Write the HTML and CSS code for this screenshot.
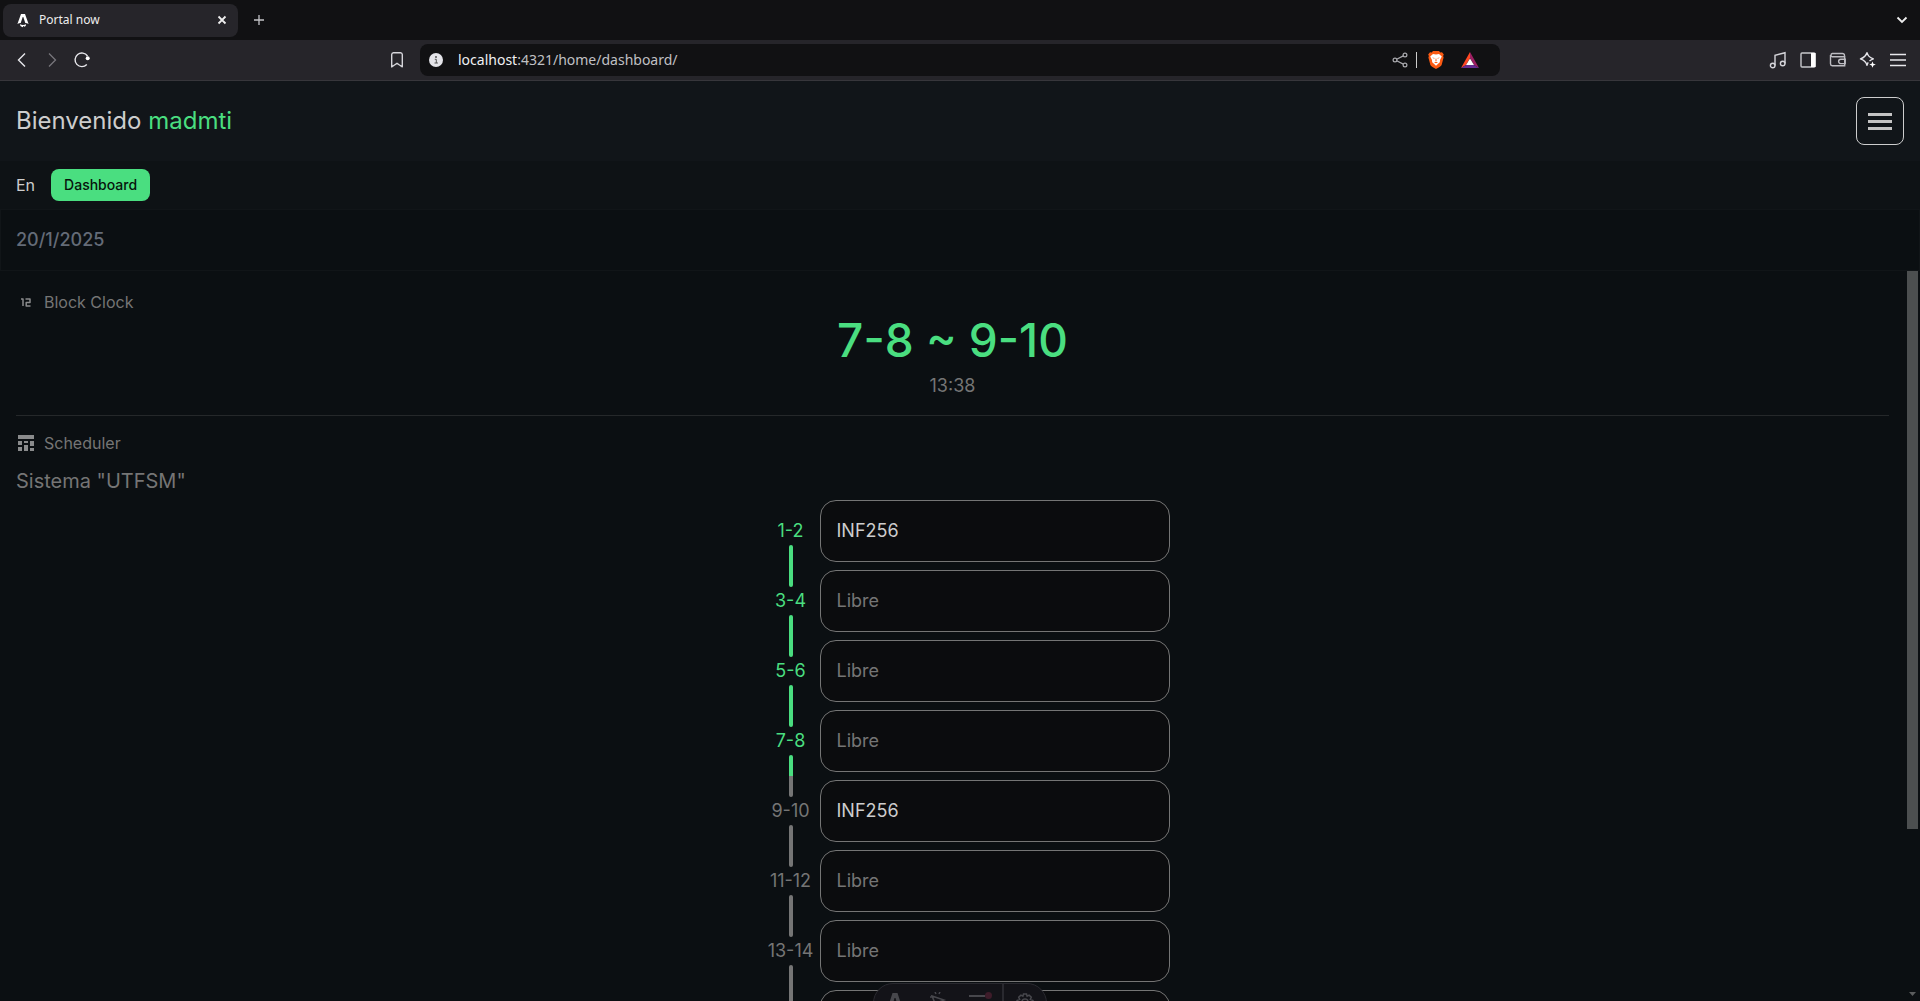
FILE: index.html
```html
<!DOCTYPE html>
<html lang="es">
<head>
<meta charset="utf-8">
<title>Portal now</title>
<link rel="stylesheet" href="styles.css">
</head>
<body>
<div class="browser">
  <div class="tabs">
    <div class="tab">
      <svg class="tab-logo" width="12" height="15" viewBox="0 0 12 15"><path d="M3 11.200c1.600.9 4.400.9 6 0 .3 1.600-1 2.200-1.500 2.600-.6-.5-.8-.9-1-.9-.7 0-.3 1-.7 1.400C4.500 13.800 2.700 12.700 3 11.200z" fill="#fff"/><path d="M4 1h4l3.600 10a10 10 0 0 0-3.300-.9L6.300 4h-.6L3.700 10.100a10 10 0 0 0-3.300.9z" fill="#fff"/></svg>
      <span class="tab-title">Portal now</span>
      <button class="tab-close" aria-label="Cerrar"><svg width="10" height="10" viewBox="0 0 10 10"><path d="M1.500 1.500l7 7M8.500 1.500l-7 7" stroke="#eee" stroke-width="1.800"/></svg></button>
    </div>
    <button class="tool" aria-label="Nueva"><svg width="12" height="12" viewBox="0 0 12 12"><path d="M6 1v10M1 6h10" stroke="#c4c4c8" stroke-width="1.300"/></svg></button>
    <button class="tool tabs-more" aria-label="Buscar"><svg width="12" height="12" viewBox="0 0 12 12"><path d="M1.500 3.500 6 8l4.500-4.500" fill="none" stroke="#eee" stroke-width="1.800"/></svg></button>
  </div>
  <div class="toolbar">
    <div class="group">
      <button class="tool" aria-label="Atrás"><svg width="16" height="16" viewBox="0 0 16 16"><path d="M11 1.500 4.500 8l6.500 6.500" fill="none" stroke="#e8e8ec" stroke-width="1.400"/></svg></button>
      <button class="tool" aria-label="Adelante"><svg width="16" height="16" viewBox="0 0 16 16"><path d="M5 1.500 11.500 8 5 14.500" fill="none" stroke="#77767c" stroke-width="1.300"/></svg></button>
      <button class="tool" aria-label="Recargar"><svg width="18" height="18" viewBox="0 0 18 18"><path d="M14.500 5A6.800 6.800 0 1 0 13.800 13.500" fill="none" stroke="#e8e8ec" stroke-width="1.400"/><circle cx="14.700" cy="7.200" r="2" fill="#fff"/></svg></button>
    </div>
    <div class="address">
      <button class="tool mark" aria-label="Marcador"><svg width="14" height="18" viewBox="0 0 14 18"><path d="M1.700 3.500A2 2 0 0 1 3.500 1.700h7a2 2 0 0 1 1.800 1.800v12.300L9.500 14 7 12.300 4.500 14l-2.800 1.900z" fill="none" stroke="#d5d5da" stroke-width="1.400" stroke-linejoin="round"/></svg></button>
      <div class="urlbar">
        <svg width="14" height="14" viewBox="0 0 14 14"><circle cx="7" cy="7" r="7" fill="#e4e4e9"/><path d="M5.800 6.300h1.500V10M5.500 10h3.400" stroke="#555" stroke-width="1" fill="none"/><circle cx="7" cy="4" r=".9" fill="#444"/></svg>
        <span class="url"><b>localhost</b>:4321/home/dashboard/</span>
        <svg width="16" height="16" viewBox="0 0 16 16"><g fill="none" stroke="#a9a9ae" stroke-width="1.200"><circle cx="3" cy="8" r="1.900"/><circle cx="13" cy="3" r="1.900"/><circle cx="13" cy="13" r="1.900"/><path d="M4.700 7.200 11.300 3.900M4.700 8.800l6.600 3.300"/></g></svg>
        <i class="divider"></i>
        <svg class="shield" width="16" height="18" viewBox="0 0 16 18"><path d="M5 0h6l1.300 1.400 1.700-.2 1.800 2.300-.7 1.500.5 1.600-2 7.400Q13 15.400 8 18 3 15.400 2.400 14L.4 6.600.9 5 .2 3.500 2 1.200l1.700.2z" fill="#fb5a13"/><path d="M5 3 8 3.400 11 3l2.800 2.400-1.700 3.300-.3 2.500L8 14.800l-3.800-3.600-.3-2.500-1.700-3.300z" fill="#fff"/><path d="M4 6.400 6.600 6.900 6.200 7.800zM12 6.400 9.400 6.900 9.800 7.800zM7.700 7.500h.6l.3 2.200-.6.500-.6-.5zM6 11.300 8 10.700l2 .6L8 12.300z" fill="#fb5a13"/></svg>
        <svg class="bat" width="18" height="18" viewBox="0 0 18 18"><path d="M9 1v6l-4 7-5 3z" fill="#ff4724"/><path d="M9 1v6l4 7 5 3z" fill="#9e1f63"/><path d="M0 17l5-3h8l5 3z" fill="#662d91"/><path d="M9 7.500l4 6.500H5z" fill="#fff"/></svg>
      </div>
    </div>
    <div class="group end">
      <button class="tool" aria-label="Música"><svg width="18" height="18" viewBox="0 0 18 18"><g fill="none" stroke="#d5d5da" stroke-width="1.400"><circle cx="3.700" cy="14.500" r="2.300"/><circle cx="13.700" cy="12.500" r="2.300"/><path d="M6 14.500V4.300l10-2.600v10.800"/></g></svg></button>
      <button class="tool" aria-label="Panel"><svg width="16" height="16" viewBox="0 0 16 16"><rect x="1" y="1" width="14" height="14" rx="1" fill="none" stroke="#c8c8cc" stroke-width="1.400"/><path d="M11 1h4.600v14H11z" fill="#fff"/></svg></button>
      <button class="tool" aria-label="Cartera"><svg width="18" height="16" viewBox="0 0 18 16"><g fill="none" stroke="#bdbdc2" stroke-width="1.400"><path d="M15.500 4.800V3.500a2 2 0 0 0-2-2H3.300a1.700 1.700 0 0 0 0 3.300h12.400v9H3.300a2 2 0 0 1-1.800-2V3"/><path d="M16.200 7.200h-4.400a2.200 2.200 0 0 0 0 4.400h4.400z"/></g></svg></button>
      <button class="tool" aria-label="Leo"><svg width="18" height="18" viewBox="0 0 18 18"><path d="M8 1.500c.8 3.200 1.800 4.600 6.300 6.400-1.800.7-3 1.300-3.800 2.100M8 1.500C7.200 4.700 6 6.200 1.500 7.900 6 9.600 7.200 11 8 14.300c.3-1.200.7-2.200 1.200-3" fill="none" stroke="#e4e4e9" stroke-width="1.400" stroke-linejoin="round"/><path d="M13.500 10.500l.9 2.200 2.400.9-2.400.9-.9 2.300-.9-2.300-2.300-.9 2.300-.9z" fill="#fff"/></svg></button>
      <button class="tool" aria-label="Menú"><svg width="16" height="14" viewBox="0 0 16 14"><path d="M0 1.500h16M0 7h16M0 12.500h16" stroke="#e8e8ec" stroke-width="1.400"/></svg></button>
    </div>
  </div>
</div>

<header class="header">
  <h1>Bienvenido <span class="green">madmti</span></h1>
  <button class="menu" aria-label="Abrir menú"><i></i><i></i><i></i></button>
</header>
<nav class="crumbs"><span>En</span><a class="chip" href="#">Dashboard</a></nav>
<div class="date">20/1/2025</div>

<div class="scroller">
  <main class="content">
    <section class="clock">
      <h2><svg width="20" height="20" viewBox="0 0 20 20"><path d="M5 7h2v7M9.500 7H14v3.500h-3.800V14H14.500" fill="none" stroke="#8a8b8c" stroke-width="1.500" stroke-linejoin="round"/></svg>Block Clock</h2>
      <p class="blocks">7-8 ~ 9-10</p>
      <p class="time">13:38</p>
    </section>
    <section class="schedule">
      <h2><svg width="20" height="20" viewBox="0 0 20 20"><path d="M2 2h16v4H2zM2 8h4v4H2zM8 8h4v2H8zM14 8h4v5h-4zM2 14h4v4H2zM8 12h4v6H8zM14 15h4v3h-4z" fill="#8a8b8c"/></svg>Scheduler</h2>
      <h3>Sistema "UTFSM"</h3>
      <ol class="rows">
        <li class="row done"><span class="slot">1-2</span><div class="card busy">INF256</div></li>
        <li class="row done"><span class="slot">3-4</span><div class="card">Libre</div></li>
        <li class="row done"><span class="slot">5-6</span><div class="card">Libre</div></li>
        <li class="row done now"><span class="slot">7-8</span><div class="card">Libre</div></li>
        <li class="row"><span class="slot">9-10</span><div class="card busy">INF256</div></li>
        <li class="row"><span class="slot">11-12</span><div class="card">Libre</div></li>
        <li class="row"><span class="slot">13-14</span><div class="card">Libre</div></li>
        <li class="row"><span class="slot"></span><div class="card"></div></li>
      </ol>
    </section>
  </main>
  <div class="scrollbar"><i class="thumb"></i><svg width="7" height="4" viewBox="0 0 7 4"><path d="M0 0h7L3.500 4z" fill="#5a5c5d"/></svg></div>
</div>

<div class="devbar">
  <button aria-label="Astro"><svg width="14" height="20" viewBox="0 0 14 20"><path d="M4.500 1h5L14 15h-4L7.500 6h-1L4 15H0z" fill="#47474c"/></svg></button>
  <button aria-label="Inspeccionar"><svg width="18" height="20" viewBox="0 0 18 20"><path d="M3 4l12 4-5 2-2 6zM6 0l1 2M11 0l-1 2M1 5l2 0" fill="none" stroke="#47474c" stroke-width="1.500"/></svg></button>
  <button aria-label="Auditar"><svg width="24" height="20" viewBox="0 0 24 20"><path d="M1 4h16M1 10h16" stroke="#47474c" stroke-width="2"/><circle cx="20.500" cy="3.500" r="3.500" fill="#3e1c2a"/></svg></button>
  <button class="gear" aria-label="Ajustes"><svg width="18" height="20" viewBox="0 0 18 20"><path d="M7.500 2h3l.6 2.200 2-1 2.200 2-1 2.200L17 8.500v3l-2.700.8-4 4.700h-3l-4-4.700L1 11.500v-3l2.700-1.100-1-2.200 2.200-2 2 1z" fill="none" stroke="#47474c" stroke-width="1.500"/><circle cx="9" cy="10" r="3" fill="none" stroke="#47474c" stroke-width="1.500"/></svg></button>
</div>
</body>
</html>
```
FILE: styles.css
```css
* { box-sizing: border-box; }
body {
  margin: 0;
  height: 100vh;
  display: flex;
  flex-direction: column;
  overflow: hidden;
  position: relative;
  background: #0b0f12;
  color: #757575;
  font: 18px/28px Inter, "Liberation Sans", sans-serif;
}
button { border: 0; padding: 0; background: none; color: inherit; }
svg { display: block; flex: none; }
h1, h2, h3, p, ol { margin: 0; padding: 0; font-weight: 400; }

.browser { font-family: "Noto Sans", sans-serif; color: #eee; }
.tabs { display: flex; align-items: center; height: 40px; padding: 0 3px; background: #111113; }
.tab { display: flex; align-items: center; width: 235px; height: 33px; padding: 0 10px 0 14px; border-radius: 8px; background: #26252a; }
.tab-title { flex: 1; padding-left: 10px; font-size: 12px; line-height: 20px; }
.tab-close { display: grid; place-items: center; width: 12px; height: 20px; }
.tool { display: grid; place-items: center; width: 30px; height: 30px; }
.tabs > .tool { margin-left: 6px; }
.tabs > .tabs-more { margin-left: auto; }
.toolbar { display: grid; grid-template-columns: 1fr 1118px 1fr; align-items: center; height: 41px; padding: 0 7px; background: #26252a; border-bottom: 1px solid #37363b; }
.group { display: flex; }
.end { justify-content: flex-end; }
.address { display: flex; align-items: center; margin-right: 19px; margin-left: -19px; }
.mark { margin-right: 8px; }
.urlbar { flex: 1; display: flex; align-items: center; height: 32px; padding: 0 21px 0 9px; border-radius: 8px; background: #111113; }
.url { flex: 1; padding-left: 15px; font-size: 14px; line-height: 20px; color: #c0c0c4; }
.url b { font-weight: 400; color: #f0f0f4; }
.divider { width: 1px; height: 16px; margin: 0 11px 0 8px; background: #ccc; }
.bat { margin-left: 17px; }

.header { display: flex; align-items: center; justify-content: space-between; height: 80px; padding: 0 16px; background: #111519; color: #cdcdcd; }
h1 { font-size: 24px; line-height: 32px; }
.green { color: #4ade80; }
.menu { display: flex; flex-direction: column; align-items: center; justify-content: center; gap: 4px; width: 48px; height: 48px; border: 1px solid #cdcdcd; border-radius: 8px; }
.menu i { width: 24px; height: 3px; background: #c4c4c4; }
.crumbs { display: flex; align-items: center; gap: 16px; height: 48px; padding: 0 16px; background: #0e1215; color: #cdcdcd; font-size: 16px; }
.chip { padding: 2px 13px; border-radius: 8px; background: #4ade80; color: #07140c; font-size: 14px; line-height: 28px; font-weight: 500; text-decoration: none; }
.date { height: 62px; padding: 16px 15px; border: 1px solid #111518; color: #646b77; font-weight: 500; }

.scroller { flex: 1; min-height: 0; display: flex; }
.content { flex: 1; padding: 17px 16px 0; overflow: hidden; }
h2 { display: flex; align-items: center; gap: 8px; font-size: 16px; line-height: 28px; }
.clock { padding-bottom: 15px; border-bottom: 1px solid #25282a; text-align: center; }
.blocks { font-size: 46px; line-height: 48px; font-weight: 500; color: #4ade80; }
.time { padding-top: 8px; }
.schedule { padding-top: 13px; }
h3 { padding: 8px 0 3px; font-size: 20px; line-height: 32px; }
.rows { width: 434px; margin: 0 auto; padding-left: 26px; list-style: none; }
.row { display: grid; grid-template-columns: 58px 1fr; height: 70px; }
.slot { display: flex; flex-direction: column; align-items: center; padding-top: 17px; }
.slot::after { content: ""; width: 4px; height: 42px; flex: none; border-radius: 2px; background: #757575; }
.done .slot { color: #4ade80; }
.done .slot::after { background: #4ade80; }
.now .slot::after { background: linear-gradient(#4ade80 50%, #757575 50%); }
.card { height: 62px; padding: 16px; border: 1px solid #757575; border-radius: 16px; background: #0b0c0e; }
.busy { color: #cdcdcd; }
.scrollbar { display: flex; flex-direction: column; justify-content: space-between; align-items: center; width: 15px; padding: 0 2px 5px; }
.thumb { width: 11px; height: 77%; background: #4c4f50; }

.devbar { position: absolute; left: 50%; bottom: -22px; display: flex; width: 174px; height: 40px; margin-left: -87px; border: 1px solid #29292f; border-radius: 20px; background: #131318; overflow: hidden; }
.devbar button { flex: 1; display: flex; justify-content: center; padding-top: 8px; }
.devbar .gear { border-left: 2px solid #29292f; }
```
